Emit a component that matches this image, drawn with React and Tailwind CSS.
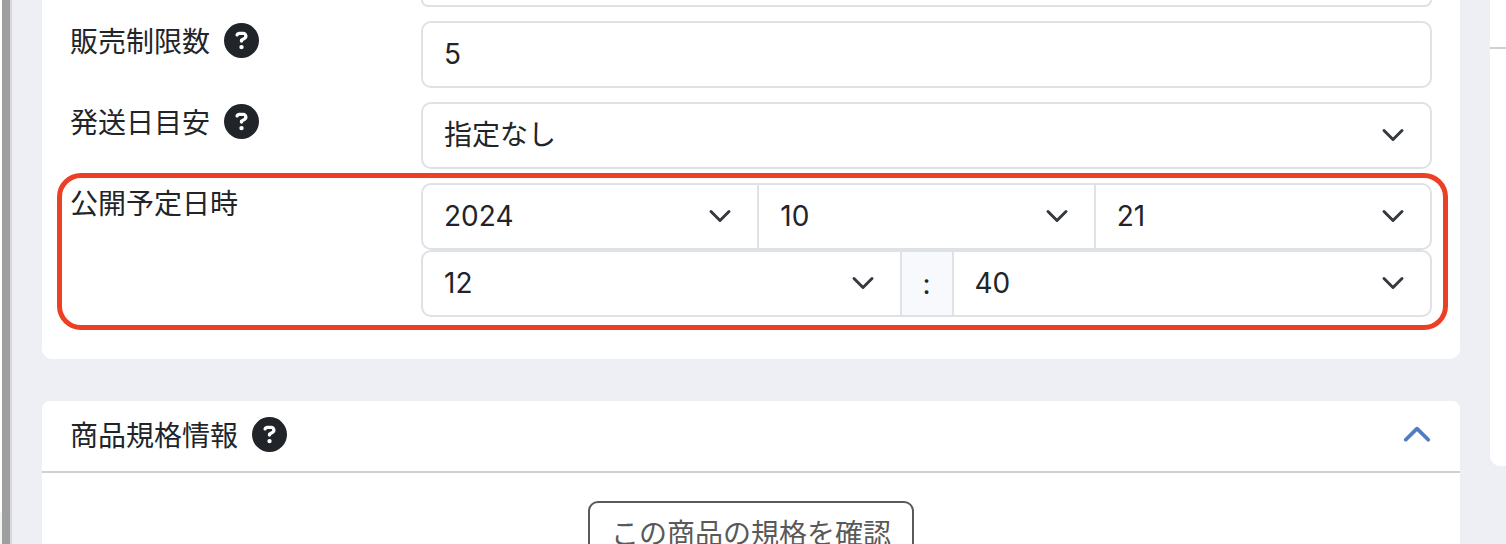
import { FaCircleQuestion, FaChevronUp } from "react-icons/fa6";

const fieldBase =
  "block h-[67px] w-full border-2 border-[#dee2e6] bg-white pb-[2px] pl-[21px] text-[28px] text-[#212529] outline-none";

function HelpButton({ label }) {
  return (
    <button type="button" aria-label={label} className="mt-[2px] shrink-0 text-[#212529]">
      <FaCircleQuestion className="block size-[35px]" />
    </button>
  );
}

function Select({ id, label, options, shape = "rounded-[10px]" }) {
  return (
    <div className="relative w-full">
      <select
        id={id}
        aria-label={label}
        className={`${fieldBase} ${shape} appearance-none pr-[60px]`}
      >
        {options.map((o) => (
          <option key={o}>{o}</option>
        ))}
      </select>
      <svg
        viewBox="0 0 16 16"
        className="pointer-events-none absolute top-0 right-[27px] bottom-[2px] my-auto size-6"
        fill="none"
        stroke="#343a40"
        strokeWidth="2"
        strokeLinecap="round"
        strokeLinejoin="round"
      >
        <path d="m2 5 6 6 6-6" />
      </svg>
    </div>
  );
}

function Row({ id, label, help, children }) {
  return (
    <div className="flex items-start">
      <div className="flex w-[351px] shrink-0 items-start gap-[14px]">
        <label htmlFor={id} className="leading-[42px]">
          {label}
        </label>
        {help && <HelpButton label={`${label}のヘルプ`} />}
      </div>
      <div className="min-w-0 flex-1">{children}</div>
    </div>
  );
}

export default function App() {
  return (
    <div className="flex h-screen overflow-hidden bg-[#eeeff4] font-['Inter','Noto_Sans_CJK_JP',sans-serif] text-[28px] text-[#212529]">
      <div className="flex w-[2px] shrink-0 flex-col bg-[#f3f4f4]">
        <div className="h-[512px] bg-white" />
      </div>
      <div className="w-2 shrink-0 bg-[#9f9f9f]" />
      <div className="w-[2px] shrink-0 bg-[#d7d8dd]" />

      <main className="ml-[30px] flex min-w-0 flex-1 flex-col gap-[42px]">
        <section className="shrink-0 rounded-b-[10px] bg-white px-7 pb-[42px]">
          <div className="ml-[351px] h-[7px] rounded-b-[10px] border-2 border-t-0 border-[#dee2e6]" />
          <div className="mt-[14px] flex flex-col gap-[14px]">
            <Row id="limit" label="販売制限数" help>
              <input
                id="limit"
                type="text"
                defaultValue="5"
                className={`${fieldBase} rounded-[10px]`}
              />
            </Row>
            <Row id="shipping" label="発送日目安" help>
              <Select id="shipping" options={["指定なし"]} />
            </Row>
            <div className="relative">
              <Row id="year" label="公開予定日時">
                <div className="flex">
                  <Select id="year" label="年" options={["2024"]} shape="rounded-l-[10px]" />
                  <div className="-ml-[2px] w-full">
                    <Select id="month" label="月" options={["10"]} shape="" />
                  </div>
                  <div className="-ml-[2px] w-full">
                    <Select id="day" label="日" options={["21"]} shape="rounded-r-[10px]" />
                  </div>
                </div>
                <div className="flex">
                  <div className="flex-1">
                    <Select id="hour" label="時" options={["12"]} shape="rounded-l-[10px]" />
                  </div>
                  <span className="-mx-[2px] flex w-[54px] items-center justify-center border-2 border-[#dee2e6] bg-[#f8f9fc]">
                    :
                  </span>
                  <div className="flex-1">
                    <Select id="minute" label="分" options={["40"]} shape="rounded-r-[10px]" />
                  </div>
                </div>
              </Row>
              <div className="pointer-events-none absolute -top-[10px] -right-4 -bottom-[13px] -left-[13px] rounded-[24px] border-[5px] border-[#eb4026]" />
            </div>
          </div>
        </section>

        <section className="shrink-0 rounded-[8px] bg-white">
          <header className="flex h-[72px] items-center justify-between border-b-2 border-[#d0d0d0] px-7">
            <div className="flex items-start gap-[14px]">
              <h2 className="leading-[42px]">商品規格情報</h2>
              <HelpButton label="商品規格情報のヘルプ" />
            </div>
            <button type="button" aria-label="折りたたむ" className="text-[#4e7dc1]">
              <FaChevronUp className="block size-[30px]" />
            </button>
          </header>
          <div className="flex justify-center p-7">
            <button
              type="button"
              className="h-[67px] rounded-[10px] border-2 border-[#595959] px-[21px] pb-[2px] text-[#595959]"
            >
              この商品の規格を確認
            </button>
          </div>
        </section>
      </main>

      <aside className="ml-[30px] h-[466px] w-4 shrink-0 rounded-bl-[10px] bg-white">
        <div className="h-[49px] border-b-2 border-[#d0d0d0]" />
      </aside>
    </div>
  );
}
